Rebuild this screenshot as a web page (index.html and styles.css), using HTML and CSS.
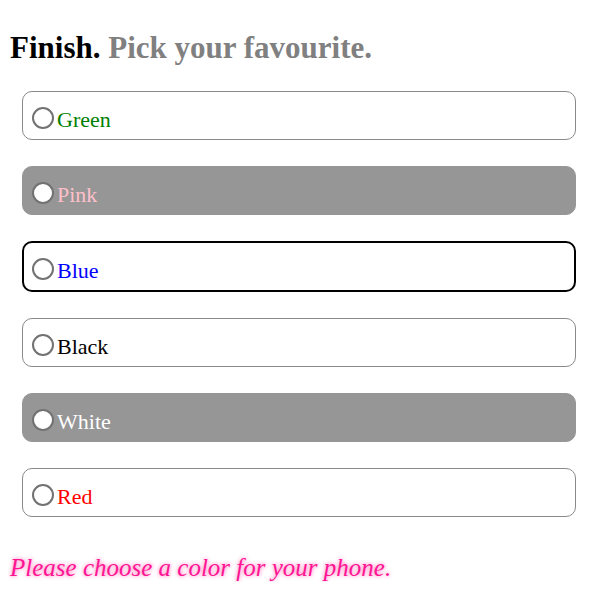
FILE: index.html
```html
<!DOCTYPE html>
<html>
<head>
<meta charset="utf-8">
<link rel="stylesheet" href="styles.css">
</head>
<body>
<h2 class="title">Finish. <span class="sub">Pick your favourite.</span></h2>
<form class="options">
  <label class="option"><input type="radio" name="c" class="radio"><span class="t-green">Green</span></label>
  <label class="option dark"><input type="radio" name="c" class="radio"><span class="t-pink">Pink</span></label>
  <label class="option focus"><input type="radio" name="c" class="radio"><span class="t-blue">Blue</span></label>
  <label class="option"><input type="radio" name="c" class="radio"><span class="t-black">Black</span></label>
  <label class="option dark"><input type="radio" name="c" class="radio"><span class="t-white">White</span></label>
  <label class="option"><input type="radio" name="c" class="radio"><span class="t-red">Red</span></label>
</form>
<p class="hint">Please choose a color for your phone.</p>
</body>
</html>
```
FILE: styles.css
```css
body {
  margin: 8px;
  font-family: "Liberation Serif", "Times New Roman", serif;
  background: #fff;
}
.title {
  font-size: 31px;
  font-weight: bold;
  margin: 22px 0 25px 2px;
  line-height: 36px;
  color: #000;
}
.sub { color: #808080; }
.options {
  display: flex;
  flex-direction: column;
  gap: 26px;
  margin: 0 13px 0 14px;
}
.option {
  display: flex;
  align-items: center;
  height: 49px;
  box-sizing: border-box;
  border: 1px solid #8a8a8a;
  border-radius: 10px;
  padding-left: 9px;
  font-size: 22px;
  background: #fff;
}
.option.dark {
  background: #969696;
  border-color: #969696;
}
.option.focus {
  height: 51px;
  border: 2px solid #000;
  padding-left: 8px;
}
.radio {
  appearance: none;
  -webkit-appearance: none;
  width: 22px;
  height: 22px;
  margin: 0 3px 0 0;
  border: 2px solid #727272;
  border-radius: 50%;
  background: #fff;
  box-sizing: border-box;
  flex: none;
  position: relative;
  top: 2px;
}
.option span { position: relative; top: 4px; }
.t-green { color: #008000; }
.t-pink { color: #ffc0cb; }
.t-blue { color: #0000ff; }
.t-black { color: #000; }
.t-white { color: #fff; }
.t-red { color: #ff0000; }
.hint {
  margin: 37px 0 0 2px;
  font-size: 25px;
  font-style: italic;
  color: #ff1493;
  text-shadow: 0 0 4px #ff69b4;
}
```
